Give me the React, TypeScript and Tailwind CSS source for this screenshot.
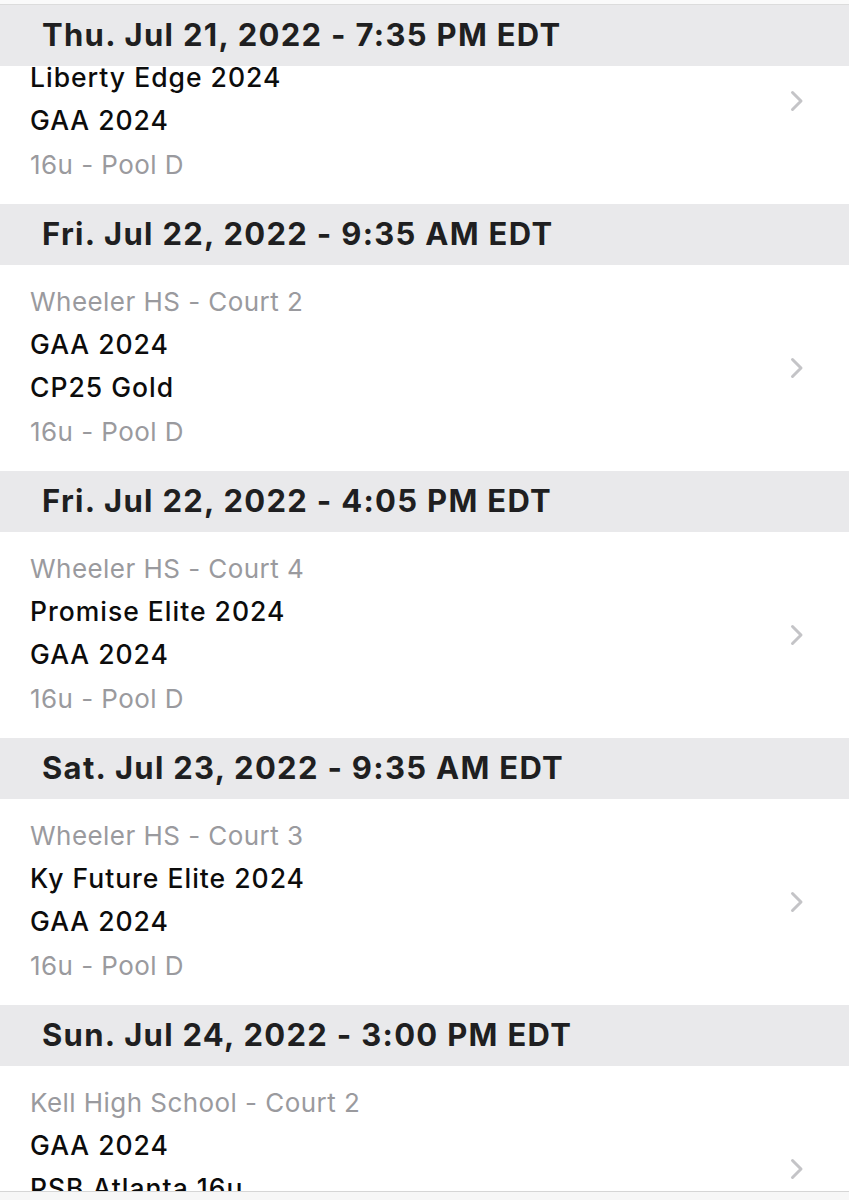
import React from 'react';

interface Game {
  date: string;
  location: string;
  teams: string[];
  pool: string;
}

const GAMES: Game[] = [
  { date: 'Thu. Jul 21, 2022 - 7:35 PM EDT', location: 'Wheeler HS - Court 1', teams: ['Liberty Edge 2024', 'GAA 2024'], pool: '16u - Pool D' },
  { date: 'Fri. Jul 22, 2022 - 9:35 AM EDT', location: 'Wheeler HS - Court 2', teams: ['GAA 2024', 'CP25 Gold'], pool: '16u - Pool D' },
  { date: 'Fri. Jul 22, 2022 - 4:05 PM EDT', location: 'Wheeler HS - Court 4', teams: ['Promise Elite 2024', 'GAA 2024'], pool: '16u - Pool D' },
  { date: 'Sat. Jul 23, 2022 - 9:35 AM EDT', location: 'Wheeler HS - Court 3', teams: ['Ky Future Elite 2024', 'GAA 2024'], pool: '16u - Pool D' },
  { date: 'Sun. Jul 24, 2022 - 3:00 PM EDT', location: 'Kell High School - Court 2', teams: ['GAA 2024', 'PSB Atlanta 16u'], pool: '16u - Pool D' },
];

function Chevron() {
  return (
    <svg width="16" height="24" viewBox="0 0 16 24" fill="none">
      <path d="M3.5 3.5 L12 12 L3.5 20.5" stroke="#c4c4c7" strokeWidth="3" strokeLinecap="round" strokeLinejoin="round" />
    </svg>
  );
}

function GameRow({ game }: { game: Game }) {
  return (
    <div className="flex items-center h-[206px] bg-white">
      <div className="flex-1 pl-[30px] pt-[15px] pb-[16px] text-[26px]">
        <div className="leading-[43px] text-[#9a9a9e] tracking-[0.45px]">{game.location}</div>
        {game.teams.map((t) => (
          <div key={t} className="leading-[43px] text-[26.5px] text-[#0c0c0c] font-medium tracking-[1px]">{t}</div>
        ))}
        <div className="leading-[46px] text-[#9a9a9e] tracking-[0.45px]">{game.pool}</div>
      </div>
      <div className="pr-[44px]">
        <Chevron />
      </div>
    </div>
  );
}

function SectionHeader({ date }: { date: string }) {
  return (
    <div className="h-[61px] bg-[#e9e9eb] flex items-center pl-[42px]">
      <span className="text-[31px] font-bold text-[#1f1f21] tracking-[1.3px]">{date}</span>
    </div>
  );
}

export default function App() {
  return (
    <div className="w-[849px] h-[1200px] flex flex-col bg-white overflow-hidden font-['Inter',_'Noto_Sans',_sans-serif]">
      {/* top edge */}
      <div className="h-[5px] bg-[#fafafa] border-b border-[#dcdcdc] shrink-0" />

      <div className="flex-1 overflow-hidden">
        {/* first section is scrolled partly under its header */}
        <SectionHeader date={GAMES[0].date} />
        <div className="h-[138px] overflow-hidden">
          <div className="-mt-[68px]">
            <GameRow game={GAMES[0]} />
          </div>
        </div>

        {GAMES.slice(1).map((g) => (
          <div key={g.date}>
            <SectionHeader date={g.date} />
            <GameRow game={g} />
          </div>
        ))}
      </div>

      {/* bottom bar */}
      <div className="h-[9px] bg-[#f7f7f7] border-t border-[#d6d6d6] shrink-0" />
    </div>
  );
}
